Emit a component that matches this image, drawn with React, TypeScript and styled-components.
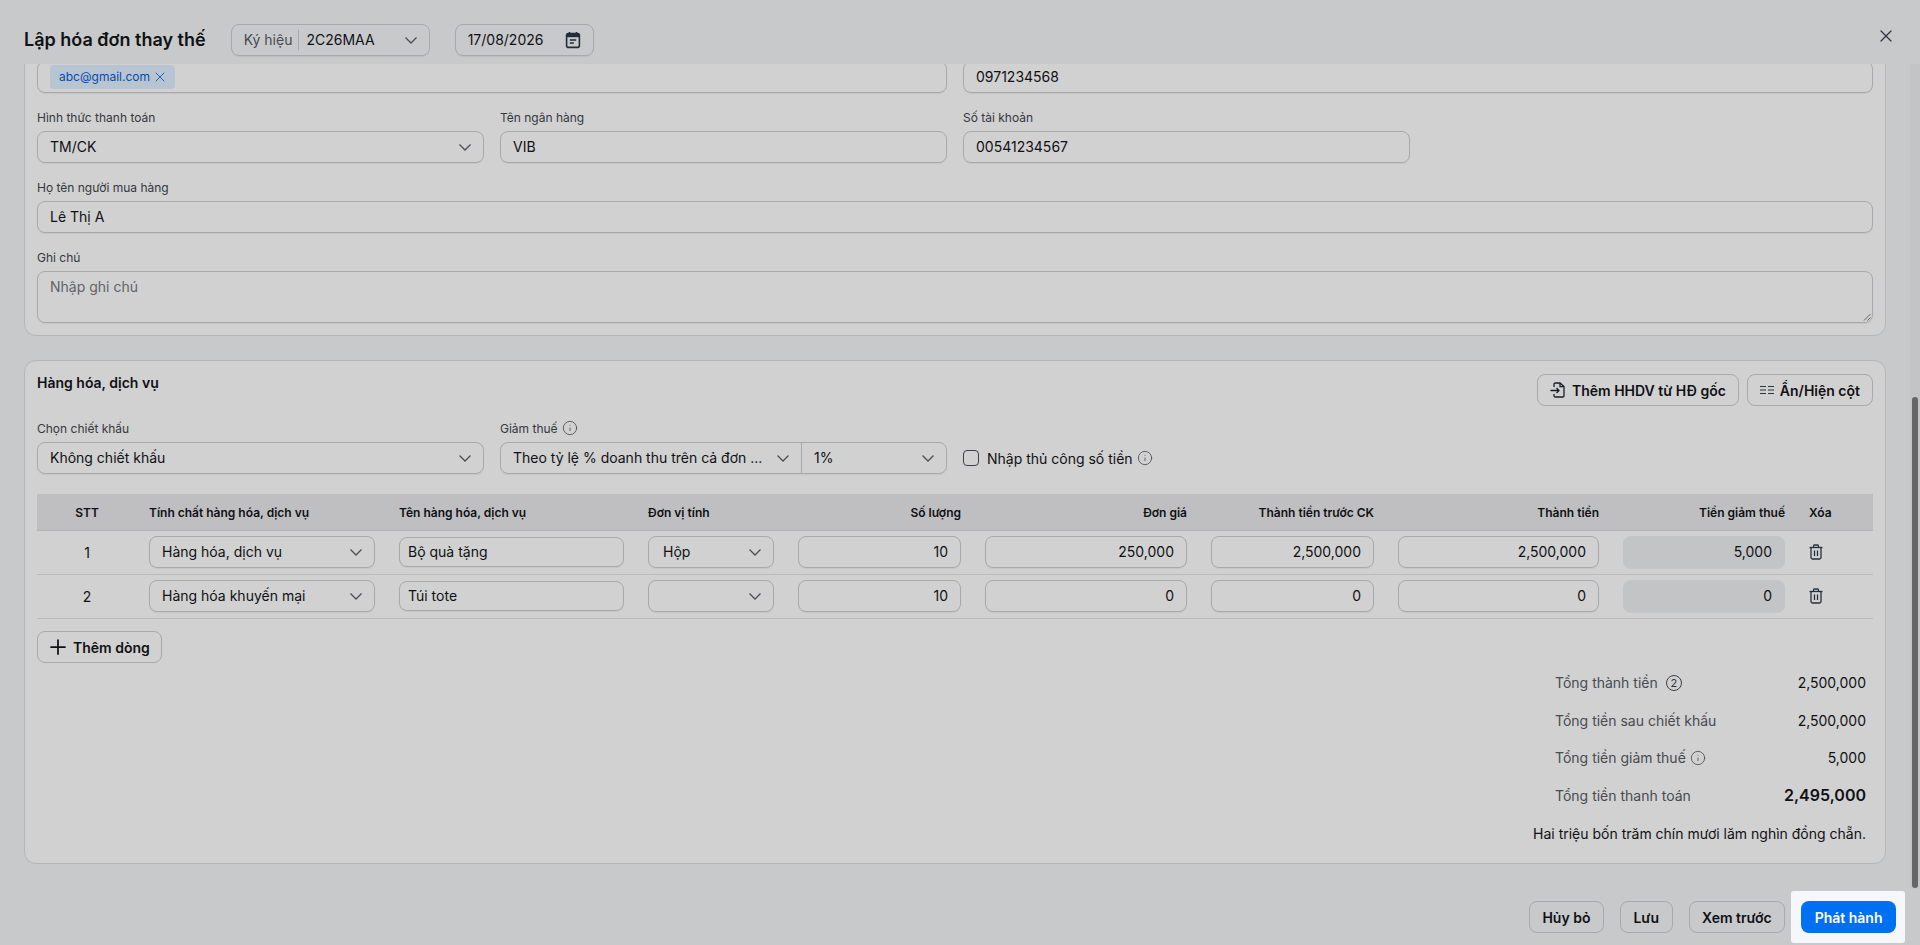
import React, { ReactElement, useLayoutEffect, useRef } from "react";
import styled, { createGlobalStyle } from "styled-components";
import { Info, Plus, X } from "lucide-react";

const colors = {
  text: "#141519",
  label: "#43464d",
  muted: "#585c65",
  border: "#cdced4",
  panelBorder: "#dddee3",
  line: "#e3e4e7",
  modal: "#f5f6f8",
  headCell: "#e9eaec",
  disabled: "#eeeff1",
  blue: "#0070f3"
};

const TABLE_COLUMNS = "100px 250px 249px 150px 187px 226px 187px 225px 186px 1fr";

const GlobalStyle = createGlobalStyle`
  html, body {
    margin: 0;
    height: 100%;
    overflow: hidden;
  }
  body {
    font-family: Inter, "Noto Sans", sans-serif;
    font-size: 14px;
    color: ${colors.text};
    background: ${colors.modal};
  }
`;

const Modal = styled.div`
  position: relative;
  display: flex;
  flex-direction: column;
  height: 945px;
  background: ${colors.modal};
`;

const Header = styled.header`
  flex: none;
  display: flex;
  align-items: center;
  height: 64px;
  padding: 16px 24px 0;
  box-sizing: border-box;
`;

const Title = styled.h1`
  margin: 0 25px 0 0;
  font-size: 18px;
  line-height: 24px;
  font-weight: 600;
`;

const CloseButton = styled.button`
  display: flex;
  margin: 0 0 8px auto;
  padding: 0;
  border: 0;
  background: none;
  color: #3d4047;
`;

const Control = styled.div<{ $width?: number; $disabled?: boolean; $height?: number; $inset?: number }>`
  display: flex;
  align-items: center;
  box-sizing: border-box;
  width: ${p => (p.$width ? `${p.$width}px` : "100%")};
  height: ${p => p.$height ?? 32}px;
  padding: 0 12px 0 ${p => p.$inset ?? 12}px;
  border: 1px solid ${p => (p.$disabled ? colors.disabled : colors.border)};
  border-radius: 8px;
  background: ${p => (p.$disabled ? colors.disabled : "transparent")};
  box-shadow: 0 1px 1px rgba(20, 21, 25, 0.06);
  line-height: 20px;
  white-space: nowrap;
`;

const ControlText = styled.span<{ $right?: boolean }>`
  flex: 1;
  min-width: 0;
  text-align: ${p => (p.$right ? "right" : "left")};
`;

const ChevronSvg = styled.svg`
  flex: none;
  margin-right: -1px;
`;

const Chevron = () => (
  <ChevronSvg width="14" height="16" viewBox="0 0 14 16" fill="none" stroke="#5b5e66" strokeWidth="1.25">
    <path d="M1.500 5.500L7 11L12.500 5.500" />
  </ChevronSvg>
);

const SymbolLabel = styled.span`
  padding-right: 6px;
  border-right: 1px solid ${colors.border};
  color: ${colors.muted};
`;

const SymbolValue = styled(ControlText)`
  padding-left: 7px;
`;

const DateField = styled(Control)`
  margin-left: 25px;
`;

const Body = styled.main`
  flex: none;
  height: 825px;
  overflow-y: scroll;
  scrollbar-width: none;
  padding: 0 34px 25px 24px;
  box-sizing: border-box;
`;

const ScrollTrack = styled.div`
  position: absolute;
  top: 64px;
  right: 0;
  width: 10px;
  height: 825px;
  background: #eeeff1;
`;

const ScrollThumb = styled.div`
  position: absolute;
  top: 333px;
  left: 2px;
  width: 6px;
  height: 491px;
  border-radius: 3px;
  background: #7c7c7c;
`;

const Panel = styled.section`
  padding: 13px 12px 12px;
  border: 1px solid ${colors.panelBorder};
  border-radius: 12px;
  background: #fff;

  & + & {
    margin-top: 24px;
  }
`;

/* fields scrolled out of view above the e-mail row */
const ScrolledOff = styled.div`
  height: 532px;
`;

const FieldGrid = styled.div`
  display: grid;
  grid-template-columns: repeat(4, 1fr);
  column-gap: 16px;
  row-gap: 14px;
`;

const Field = styled.div<{ $span?: number }>`
  grid-column: span ${p => p.$span ?? 1};
  min-width: 0;
`;

const Label = styled.label`
  display: flex;
  align-items: center;
  gap: 4px;
  height: 20px;
  margin-bottom: 4px;
  font-size: 12px;
  color: ${colors.label};
`;

const Chip = styled.span`
  display: inline-flex;
  align-items: center;
  gap: 2px;
  height: 24px;
  padding: 0 7px 0 9px;
  border-radius: 4px;
  background: #e0f0ff;
  font-size: 12px;
  color: #0d5bd6;
`;

const Note = styled.div`
  position: relative;
  box-sizing: border-box;
  height: 52px;
  padding: 5px 12px;
  border: 1px solid ${colors.border};
  border-radius: 8px;
  box-shadow: 0 1px 1px rgba(20, 21, 25, 0.06);
  line-height: 20px;
  color: #777a82;
`;

const ResizeGrip = styled.svg`
  position: absolute;
  right: 1px;
  bottom: 1px;
  width: 8px;
  height: 8px;
`;

const SectionTop = styled.div`
  display: flex;
  justify-content: space-between;
  margin-bottom: 12px;
`;

const SectionTitle = styled.h2`
  margin: 0;
  font-size: 14px;
  line-height: 17px;
  font-weight: 600;
`;

const ToolButtons = styled.div`
  display: flex;
  gap: 8px;
`;

const Button = styled.button`
  display: inline-flex;
  align-items: center;
  gap: 6px;
  height: 32px;
  padding: 0 12px;
  box-sizing: border-box;
  border: 1px solid ${colors.border};
  border-radius: 8px;
  background: transparent;
  font: 600 14px Inter, sans-serif;
  color: ${colors.text};
  white-space: nowrap;
`;

const SplitControl = styled(Control)`
  padding: 0;
`;

const SplitMain = styled.div`
  flex: none;
  display: flex;
  align-items: center;
  gap: 12px;
  box-sizing: border-box;
  width: 301px;
  height: 100%;
  padding: 0 12px;
  border-right: 1px solid ${colors.border};
`;

const SplitRate = styled.div`
  flex: 1;
  display: flex;
  align-items: center;
  padding: 0 12px;
`;

const ManualField = styled.label`
  align-self: end;
  display: flex;
  align-items: center;
  gap: 8px;
  height: 32px;
`;

const CheckBox = styled.span`
  width: 16px;
  height: 16px;
  box-sizing: border-box;
  border: 1px solid #4d5058;
  border-radius: 4px;
`;

const InfoIcon = styled(Info).attrs({ size: 16, strokeWidth: 1.25 })`
  flex: none;
  color: #5b5e66;
`;

const ManualInfoIcon = styled(InfoIcon)`
  margin-left: -4px;
`;

const Table = styled.div`
  margin-top: 20px;
`;

const HeadRow = styled.div`
  display: grid;
  grid-template-columns: ${TABLE_COLUMNS};
  align-items: center;
  box-sizing: border-box;
  height: 37px;
  border-bottom: 1px solid #dcdde1;
  background: ${colors.headCell};
`;

const HeadCell = styled.div<{ $align?: string }>`
  padding: 0 12px;
  font-size: 12px;
  font-weight: 600;
  text-align: ${p => p.$align ?? "left"};
`;

const Row = styled.div`
  display: grid;
  grid-template-columns: ${TABLE_COLUMNS};
  align-items: center;
  box-sizing: border-box;
  height: 44px;
  padding: 0 0 1px;
  border-bottom: 1px solid ${colors.line};
`;

const Cell = styled.div<{ $center?: boolean }>`
  padding: 0 12px;
  text-align: ${p => (p.$center ? "center" : "left")};
`;

const TrashSvg = styled.svg`
  display: block;
`;

const DeleteIcon = () => (
  <TrashSvg width="14" height="16" viewBox="0 0 14 16" fill="none" stroke="#2d3b4c" strokeWidth="1.3">
    <path d="M.5 3.500h13" />
    <path d="M4.500 3.500V2a1 1 0 0 1 1-1h3a1 1 0 0 1 1 1v1.500" />
    <path d="M2 3.500v10a1.500 1.500 0 0 0 1.500 1.500h7a1.500 1.500 0 0 0 1.500-1.500v-10" />
    <path d="M5.500 6.500v5.500M8.500 6.500v5.500" />
  </TrashSvg>
);

const AddRow = styled(Button)`
  margin-top: 12px;
  gap: 3px;
  padding: 0 11px 0 8px;
`;

const Totals = styled.div`
  display: flex;
  flex-direction: column;
  align-items: flex-end;
  margin: 1px 7px 7px 0;
`;

const TotalRow = styled.div`
  display: flex;
  justify-content: space-between;
  align-items: center;
  width: 311px;
  height: 37.5px;
`;

const TotalLabel = styled.span`
  display: inline-flex;
  align-items: center;
  gap: 4px;
  color: ${colors.muted};
`;

const TotalValue = styled.span<{ $strong?: boolean }>`
  font-size: ${p => (p.$strong ? 16 : 14)}px;
  font-weight: ${p => (p.$strong ? 600 : 400)};
`;

const CountBadge = styled.span`
  display: inline-flex;
  align-items: center;
  justify-content: center;
  width: 16px;
  height: 16px;
  margin-left: 4px;
  box-sizing: border-box;
  border: 1px solid #4a4d55;
  border-radius: 50%;
  font-size: 11px;
  color: #3d4047;
`;

const AmountInWords = styled.div`
  margin-top: 10px;
  line-height: 20px;
`;

const Footer = styled.footer`
  flex: 1;
  display: flex;
  justify-content: flex-end;
  align-items: center;
  gap: 16px;
  padding: 0 24px 0 0;
`;

const FooterButton = styled(Button)`
  padding: 0 12.5px;
`;

const Spotlight = styled.div`
  position: relative;
  z-index: 10;

  &::before {
    content: "";
    position: absolute;
    inset: -10px -9px -10px -10px;
    z-index: -1;
    border-radius: 3px;
    background: #f5f7fa;
    box-shadow: 0 0 0 4000px rgba(0, 0, 0, 0.18);
  }
`;

const PublishButton = styled(Button)`
  border: 0;
  background: ${colors.blue};
  color: #fff;
  padding: 0 13.5px;
`;

const CalendarIcon = () => (
  <svg width="16" height="18" viewBox="0 0 16 18" fill="none">
    <path d="M4.500 1v2.500M11.500 1v2.500" stroke="#2a3647" strokeWidth="1.6" />
    <rect x="1.600" y="2.600" width="12.800" height="13.800" rx="2" stroke="#2a3647" strokeWidth="1.6" />
    <rect x="1.600" y="2.600" width="12.800" height="3.600" fill="#2a3647" />
    <path d="M4.800 9h6.400M4.800 12h4" stroke="#2a3647" strokeWidth="1.4" />
  </svg>
);

const ImportIcon = () => (
  <svg width="16" height="16" viewBox="0 0 16 16" fill="none" stroke="#20242c" strokeWidth="1.3">
    <path d="M4 5V2.200C4 1.500 4.500 1 5.200 1h4.800L14 4.600v9.200c0 .7-.5 1.200-1.200 1.200H5.200C4.500 15 4 14.500 4 13.800V12" />
    <path d="M10 1v3.600H14M.5 8.500h8.500M6.500 6L9 8.500L6.500 11" />
  </svg>
);

const ColumnsIcon = () => (
  <svg width="14" height="16" viewBox="0 0 14 16" fill="none" stroke="#3a3e46" strokeWidth="1">
    <path d="M0 4.500h6M8 4.500h6M0 8h6M8 8h6M0 11.500h6M8 11.500h6" />
  </svg>
);

interface InvoiceLine {
  no: number;
  kind: string;
  name: string;
  unit: string;
  quantity: string;
  price: string;
  beforeDiscount: string;
  amount: string;
  taxCut: string;
}

const lines: InvoiceLine[] = [
  {
    no: 1,
    kind: "Hàng hóa, dịch vụ",
    name: "Bộ quà tặng",
    unit: "Hộp",
    quantity: "10",
    price: "250,000",
    beforeDiscount: "2,500,000",
    amount: "2,500,000",
    taxCut: "5,000"
  },
  {
    no: 2,
    kind: "Hàng hóa khuyến mại",
    name: "Túi tote",
    unit: "",
    quantity: "10",
    price: "0",
    beforeDiscount: "0",
    amount: "0",
    taxCut: "0"
  }
];

function SelectBox({ value, inset }: { value: string; inset?: number }): ReactElement {
  return (
    <Control $inset={inset}>
      <ControlText>{value}</ControlText>
      <Chevron />
    </Control>
  );
}

function TextBox({ value }: { value: string }): ReactElement {
  return (
    <Control>
      <ControlText>{value}</ControlText>
    </Control>
  );
}

function NumberBox({ value, disabled }: { value: string; disabled?: boolean }): ReactElement {
  return (
    <Control $disabled={disabled}>
      <ControlText $right>{value}</ControlText>
    </Control>
  );
}

function App(): ReactElement {
  const bodyRef = useRef<HTMLElement>(null);

  useLayoutEffect(() => {
    if (bodyRef.current) bodyRef.current.scrollTop = bodyRef.current.scrollHeight;
  }, []);

  return (
    <Modal>
      <GlobalStyle />
      <Header>
        <Title>Lập hóa đơn thay thế</Title>
        <Control $width={199}>
          <SymbolLabel>Ký hiệu</SymbolLabel>
          <SymbolValue>2C26MAA</SymbolValue>
          <Chevron />
        </Control>
        <DateField $width={139}>
          <ControlText>17/08/2026</ControlText>
          <CalendarIcon />
        </DateField>
        <CloseButton aria-label="Đóng">
          <X size={20} strokeWidth={1.5} />
        </CloseButton>
      </Header>

      <Body ref={bodyRef}>
        <Panel>
          <ScrolledOff />
          <FieldGrid>
            <Field $span={2}>
              <Control>
                <Chip>
                  abc@gmail.com
                  <X size={16} strokeWidth={1.25} />
                </Chip>
              </Control>
            </Field>
            <Field $span={2}>
              <TextBox value="0971234568" />
            </Field>
            <Field>
              <Label>Hình thức thanh toán</Label>
              <SelectBox value="TM/CK" />
            </Field>
            <Field>
              <Label>Tên ngân hàng</Label>
              <TextBox value="VIB" />
            </Field>
            <Field>
              <Label>Số tài khoản</Label>
              <TextBox value="00541234567" />
            </Field>
            <Field />
            <Field $span={4}>
              <Label>Họ tên người mua hàng</Label>
              <TextBox value="Lê Thị A" />
            </Field>
            <Field $span={4}>
              <Label>Ghi chú</Label>
              <Note>
                Nhập ghi chú
                <ResizeGrip viewBox="0 0 8 8" stroke="#55585f" strokeWidth="0.8">
                  <path d="M1 7.500L7.500 1M4.500 7.500L7.500 4.500" />
                </ResizeGrip>
              </Note>
            </Field>
          </FieldGrid>
        </Panel>

        <Panel>
          <SectionTop>
            <SectionTitle>Hàng hóa, dịch vụ</SectionTitle>
            <ToolButtons>
              <Button>
                <ImportIcon />
                Thêm HHDV từ HĐ gốc
              </Button>
              <Button>
                <ColumnsIcon />
                Ẩn/Hiện cột
              </Button>
            </ToolButtons>
          </SectionTop>

          <FieldGrid>
            <Field>
              <Label>Chọn chiết khấu</Label>
              <SelectBox value="Không chiết khấu" />
            </Field>
            <Field>
              <Label>
                Giảm thuế <InfoIcon />
              </Label>
              <SplitControl>
                <SplitMain>
                  <ControlText>Theo tỷ lệ % doanh thu trên cả đơn ...</ControlText>
                  <Chevron />
                </SplitMain>
                <SplitRate>
                  <ControlText>1%</ControlText>
                  <Chevron />
                </SplitRate>
              </SplitControl>
            </Field>
            <ManualField>
              <CheckBox />
              Nhập thủ công số tiền
              <ManualInfoIcon />
            </ManualField>
          </FieldGrid>

          <Table>
            <HeadRow>
              <HeadCell $align="center">STT</HeadCell>
              <HeadCell>Tính chất hàng hóa, dịch vụ</HeadCell>
              <HeadCell>Tên hàng hóa, dịch vụ</HeadCell>
              <HeadCell>Đơn vị tính</HeadCell>
              <HeadCell $align="right">Số lượng</HeadCell>
              <HeadCell $align="right">Đơn giá</HeadCell>
              <HeadCell $align="right">Thành tiền trước CK</HeadCell>
              <HeadCell $align="right">Thành tiền</HeadCell>
              <HeadCell $align="right">Tiền giảm thuế</HeadCell>
              <HeadCell>Xóa</HeadCell>
            </HeadRow>
            {lines.map(line => (
              <Row key={line.no}>
                <Cell $center>{line.no}</Cell>
                <Cell>
                  <SelectBox value={line.kind} />
                </Cell>
                <Cell>
                  <Control $height={30} $inset={8}>
                    <ControlText>{line.name}</ControlText>
                  </Control>
                </Cell>
                <Cell>
                  <SelectBox value={line.unit} inset={14} />
                </Cell>
                <Cell>
                  <NumberBox value={line.quantity} />
                </Cell>
                <Cell>
                  <NumberBox value={line.price} />
                </Cell>
                <Cell>
                  <NumberBox value={line.beforeDiscount} />
                </Cell>
                <Cell>
                  <NumberBox value={line.amount} />
                </Cell>
                <Cell>
                  <NumberBox value={line.taxCut} disabled />
                </Cell>
                <Cell>
                  <DeleteIcon />
                </Cell>
              </Row>
            ))}
          </Table>

          <AddRow>
            <Plus size={24} strokeWidth={1.75} />
            Thêm dòng
          </AddRow>

          <Totals>
            <TotalRow>
              <TotalLabel>
                Tổng thành tiền <CountBadge>2</CountBadge>
              </TotalLabel>
              <TotalValue>2,500,000</TotalValue>
            </TotalRow>
            <TotalRow>
              <TotalLabel>Tổng tiền sau chiết khấu</TotalLabel>
              <TotalValue>2,500,000</TotalValue>
            </TotalRow>
            <TotalRow>
              <TotalLabel>
                Tổng tiền giảm thuế <InfoIcon />
              </TotalLabel>
              <TotalValue>5,000</TotalValue>
            </TotalRow>
            <TotalRow>
              <TotalLabel>Tổng tiền thanh toán</TotalLabel>
              <TotalValue $strong>2,495,000</TotalValue>
            </TotalRow>
            <AmountInWords>Hai triệu bốn trăm chín mươi lăm nghìn đồng chẵn.</AmountInWords>
          </Totals>
        </Panel>
      </Body>

      <ScrollTrack>
        <ScrollThumb />
      </ScrollTrack>

      <Footer>
        <FooterButton>Hủy bỏ</FooterButton>
        <FooterButton>Lưu</FooterButton>
        <FooterButton>Xem trước</FooterButton>
        <Spotlight>
          <PublishButton>Phát hành</PublishButton>
        </Spotlight>
      </Footer>
    </Modal>
  );
}

export default App;
